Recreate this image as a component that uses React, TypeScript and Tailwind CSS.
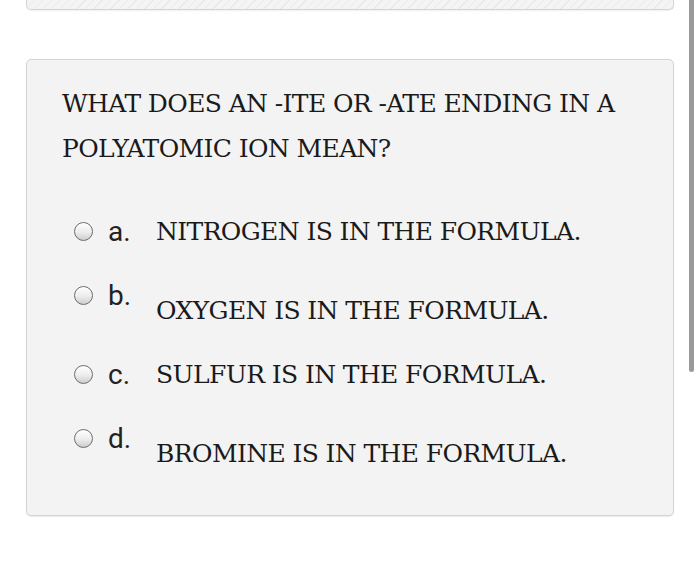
const options = [
  { key: "a.", text: "NITROGEN IS IN THE FORMULA.", drop: false },
  { key: "b.", text: "OXYGEN IS IN THE FORMULA.", drop: true },
  { key: "c.", text: "SULFUR IS IN THE FORMULA.", drop: false },
  { key: "d.", text: "BROMINE IS IN THE FORMULA.", drop: true },
];

const Radio = () => (
  <span className="mt-[4px] block h-[19px] w-[19px] shrink-0 rounded-full border-[1.5px] border-[#6c6c6c] bg-[linear-gradient(180deg,#ffffff_0%,#ececec_55%,#cdcdcd_100%)]" />
);

export default function App() {
  return (
    <div className="relative h-[561px] w-[700px] overflow-hidden bg-white">
      <div className="flex flex-col px-[26px]">
        <div className="h-[10px] rounded-b-[5px] border border-t-0 border-[#d4d4d4] bg-[repeating-linear-gradient(135deg,#f4f4f4_0px,#f4f4f4_5px,#e9e9e9_5px,#e9e9e9_6px)] shadow-[0_1px_1px_rgba(0,0,0,0.06)]" />
        <div className="mt-[49px] h-[457px] rounded-[5px] border border-[#d4d4d4] bg-[#f3f3f3] pl-[35px] pt-[21px] shadow-[0_1px_1px_rgba(0,0,0,0.08)]">
          <p className="whitespace-nowrap font-[DejaVu_Serif,serif] text-[25px] leading-[45px] tracking-[-0.6px] text-[#1a1a1a]">
            WHAT DOES AN -ITE OR -ATE ENDING IN A
            <br />
            POLYATOMIC ION MEAN?
          </p>
          <div className="mt-[47px] flex flex-col gap-[36px] pl-[12px]">
            {options.map((o) => (
              <div key={o.key} className="flex items-start">
                <Radio />
                <span className="ml-[15px] w-[48px] font-[Roboto,sans-serif] text-[28px] leading-[28px] text-[#222]">
                  {o.key}
                </span>
                <span
                  className={
                    o.drop
                      ? "mt-[15px] whitespace-nowrap font-[DejaVu_Serif,serif] text-[25px] leading-[28px] tracking-[-0.6px] text-[#1a1a1a]"
                      : "whitespace-nowrap font-[DejaVu_Serif,serif] text-[25px] leading-[28px] tracking-[-0.6px] text-[#1a1a1a]"
                  }
                >
                  {o.text}
                </span>
              </div>
            ))}
          </div>
        </div>
      </div>
      <div className="absolute left-[689px] top-0 h-[372px] w-[5px] rounded-b-full bg-[#9a9a9a]" />
    </div>
  );
}
